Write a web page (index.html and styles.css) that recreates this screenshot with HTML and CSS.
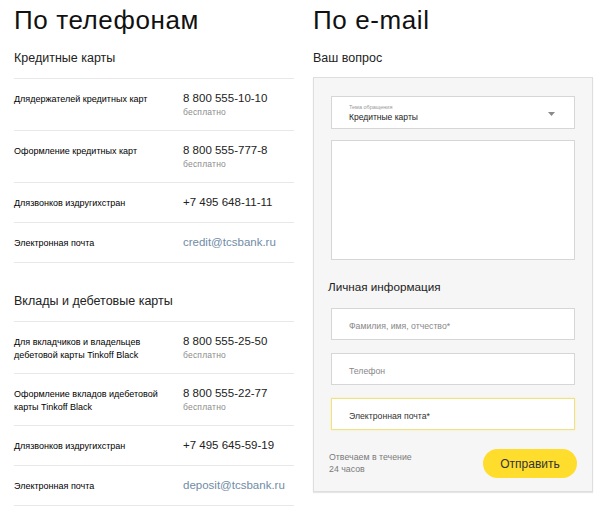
FILE: index.html
```html
<!DOCTYPE html>
<html lang="ru">
<head>
<meta charset="utf-8">
<title>Контакты</title>
<link rel="stylesheet" href="styles.css">
</head>
<body>
<div class="page">
  <section class="col phones">
    <h1 class="title">По телефонам</h1>
    <h2 class="group">Кредитные карты</h2>
    <div class="row tall">
      <div class="label">Длядержателей кредитных карт</div>
      <div class="value"><div class="phone">8 800 555-10-10</div><div class="free">бесплатно</div></div>
    </div>
    <div class="row tall">
      <div class="label">Оформление кредитных карт</div>
      <div class="value"><div class="phone">8 800 555-777-8</div><div class="free">бесплатно</div></div>
    </div>
    <div class="row">
      <div class="label">Длязвонков издругихстран</div>
      <div class="value"><div class="phone">+7 495 648-11-11</div></div>
    </div>
    <div class="row">
      <div class="label">Электронная почта</div>
      <div class="value"><div class="mail">credit@tcsbank.ru</div></div>
    </div>

    <h2 class="group second">Вклады и дебетовые карты</h2>
    <div class="row tall">
      <div class="label">Для вкладчиков и владельцев<br>дебетовой карты Tinkoff Black</div>
      <div class="value"><div class="phone">8 800 555-25-50</div><div class="free">бесплатно</div></div>
    </div>
    <div class="row tall">
      <div class="label">Оформление вкладов идебетовой<br>карты Tinkoff Black</div>
      <div class="value"><div class="phone">8 800 555-22-77</div><div class="free">бесплатно</div></div>
    </div>
    <div class="row">
      <div class="label">Длязвонков издругихстран</div>
      <div class="value"><div class="phone">+7 495 645-59-19</div></div>
    </div>
    <div class="row">
      <div class="label">Электронная почта</div>
      <div class="value"><div class="mail">deposit@tcsbank.ru</div></div>
    </div>
  </section>

  <section class="col email">
    <h1 class="title">По e-mail</h1>
    <h2 class="group plain">Ваш вопрос</h2>
    <div class="formbox">
      <div class="select">
        <div class="select-text">
          <div class="select-label">Тема обращения</div>
          <div class="select-value">Кредитные карты</div>
        </div>
        <svg class="arrow" width="7" height="4" viewBox="0 0 7 4"><path d="M0 0h7L3.5 4z" fill="#8a8a8a"/></svg>
      </div>
      <div class="textarea"></div>
      <h3 class="personal">Личная информация</h3>
      <div class="input">Фамилия, имя, отчество*</div>
      <div class="input">Телефон</div>
      <div class="input focus">Электронная почта*</div>
      <div class="bottom">
        <div class="note">Отвечаем в течение<br>24 часов</div>
        <div class="btn">Отправить</div>
      </div>
    </div>
  </section>
</div>
</body>
</html>
```
FILE: styles.css
```css
* { box-sizing: border-box; }
html, body { margin: 0; padding: 0; background: #fff; }
body {
  font-family: "Liberation Sans", Arial, sans-serif;
  color: #1a1a1a;
  width: 600px;
  height: 514px;
  overflow: hidden;
}
.page {
  display: grid;
  grid-template-columns: 280px 280px;
  column-gap: 19px;
  padding-left: 14px;
}
.title {
  margin: 0;
  padding-top: 5px;
  font-size: 26px;
  line-height: 30px;
  font-weight: normal;
  letter-spacing: 0.6px;
  color: #111;
}
.group {
  margin: 15px 0 0;
  height: 29px;
  padding-bottom: 12px;
  font-size: 12.5px;
  line-height: 16px;
  font-weight: normal;
  color: #222;
  border-bottom: 1px solid #e8e8e8;
}
.group.second { margin-top: 30px; }
.group.plain { border-bottom: none; height: 27px; }

.row {
  display: grid;
  grid-template-columns: 169px 1fr;
  height: 40px;
  padding-top: 12px;
  border-bottom: 1px solid #e8e8e8;
}
.row.tall { height: 52px; }
.label {
  font-size: 9px;
  line-height: 13px;
  color: #000;
  padding-top: 2px;
}
.phone {
  font-size: 11.5px;
  line-height: 14px;
  color: #222;
}
.free {
  font-size: 8.5px;
  line-height: 12px;
  margin-top: 1px;
  letter-spacing: 0.2px;
  color: #8c8c8c;
}
.mail {
  font-size: 11.5px;
  line-height: 14px;
  color: #6f8ca6;
}

.formbox {
  background: #f6f6f6;
  border: 1px solid #dedede;
  height: 415px;
  padding: 18px 17px 0 17px;
  box-shadow: 0 1px 1px #e6e6e6;
}
.select {
  height: 33px;
  background: #fff;
  border: 1px solid #d6d6d6;
  display: flex;
  align-items: center;
  padding: 0 19px 0 17px;
}
.select-text { flex: 1; padding-top: 1px; }
.select-label {
  font-size: 5.5px;
  line-height: 7px;
  color: #999;
}
.select-value {
  font-size: 8.5px;
  line-height: 11px;
  color: #222;
  margin-top: 1px;
}
.arrow { display: block; margin-top: 3px; }
.textarea {
  margin-top: 11px;
  height: 120px;
  background: #fff;
  border: 1px solid #d6d6d6;
}
.personal {
  margin: 19px 0 0 -3px;
  font-size: 11.7px;
  line-height: 15px;
  font-weight: normal;
  color: #222;
}
.input {
  margin-top: 13px;
  height: 32px;
  background: #fff;
  border: 1px solid #d6d6d6;
  display: flex;
  align-items: center;
  padding: 3px 0 0 17px;
  font-size: 8.7px;
  color: #888;
}
.personal + .input { margin-top: 14px; }
.input.focus {
  border-color: #efe08a;
  box-shadow: 0 0 2px #f6ee9f;
  color: #333;
}
.bottom {
  margin-top: 19px;
  display: flex;
  justify-content: space-between;
  align-items: flex-start;
}
.note {
  margin: 2px 0 0 -2px;
  font-size: 8.8px;
  line-height: 12px;
  color: #7a7a7a;
}
.btn {
  width: 94px;
  height: 29px;
  border-radius: 15px;
  background: #ffdd2d;
  color: #333;
  font-size: 12px;
  display: flex;
  align-items: center;
  justify-content: center;
  margin-right: -2px;
}
```
